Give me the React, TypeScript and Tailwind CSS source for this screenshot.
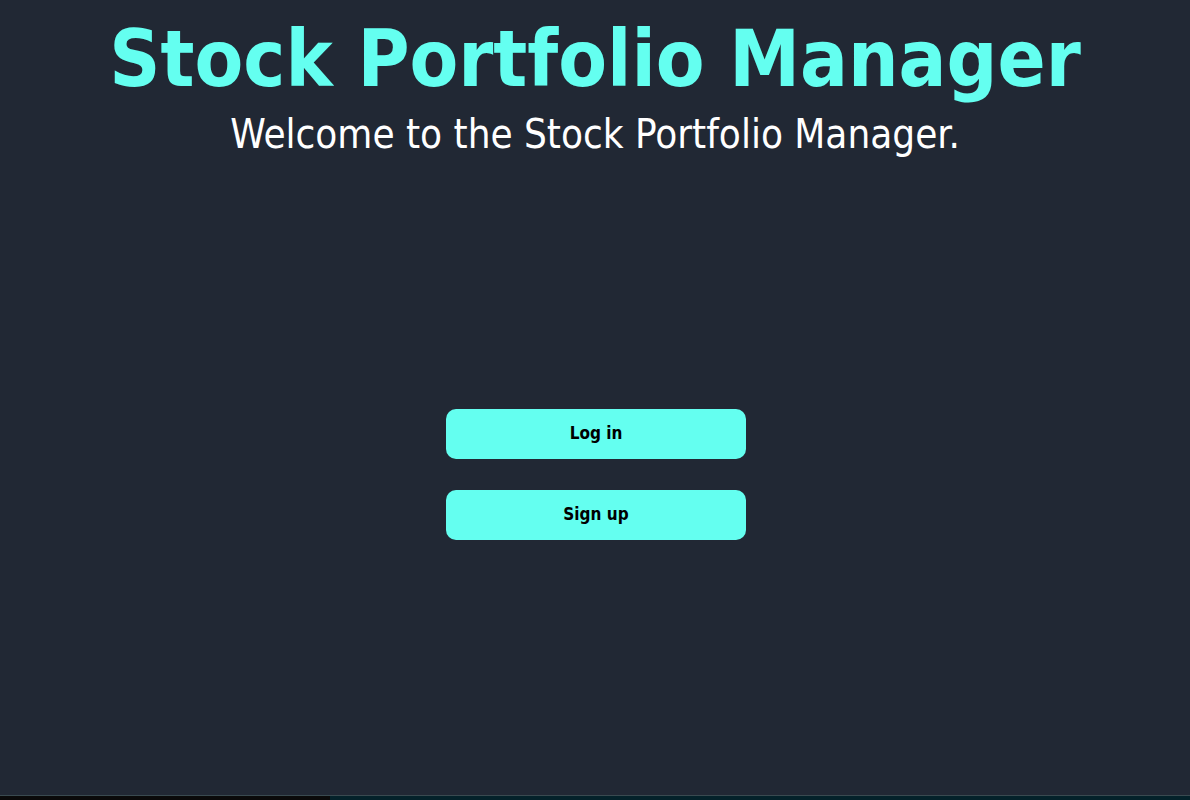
import React from "react";

const font = { fontFamily: "'DejaVu Sans Condensed', 'DejaVu Sans', sans-serif" };

export default function App() {
  return (
    <div style={font} className="w-full h-[800px] bg-[#212834] flex flex-col">
      <div className="flex-1 flex flex-col items-center">
        <h1 className="mt-[20px] text-[79px] leading-none font-bold text-[#64fff0] font-stretch-condensed">
          Stock Portfolio Manager
        </h1>
        <p className="mt-[15px] text-[40px] leading-none text-white font-stretch-condensed">
          Welcome to the Stock Portfolio Manager.
        </p>
        <div className="mt-[255px] ml-[2px] flex flex-col gap-[31px]">
          <button className="w-[300px] h-[50px] rounded-[10px] bg-[#64fff0] text-black font-bold text-[17px] font-stretch-condensed">
            Log in
          </button>
          <button className="w-[300px] h-[50px] rounded-[10px] bg-[#64fff0] text-black font-bold text-[17px] font-stretch-condensed">
            Sign up
          </button>
        </div>
      </div>
      <div className="h-[5px] flex border-t border-[#3a4a50]">
        <div className="w-[330px] bg-[#0a0a0a]"></div>
        <div className="flex-1 bg-[#04222a]"></div>
      </div>
    </div>
  );
}
